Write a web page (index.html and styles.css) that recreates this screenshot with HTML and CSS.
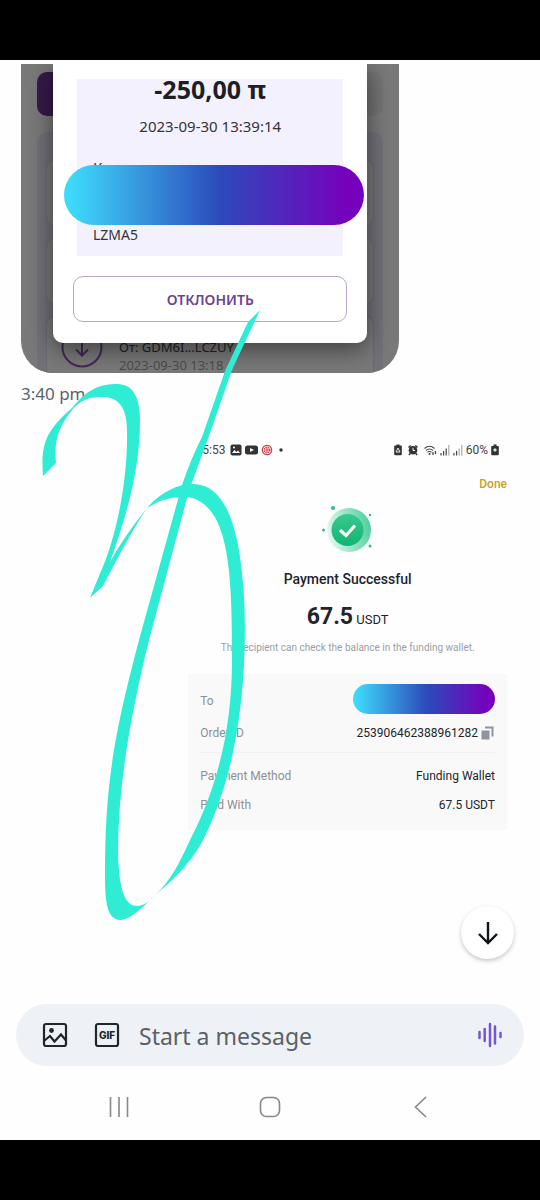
FILE: index.html
```html
<!DOCTYPE html>
<html lang="en">
  <head>
    <meta charset="UTF-8" />
    <meta name="viewport" content="width=device-width, initial-scale=1.0" />
    <title>Messages</title>
    <link rel="stylesheet" href="styles.css">
  </head>
  <body>
    <div class="letterbox"></div>
    <main class="chat">
      <div class="wallet">
        <div class="wallet-back">
          <div class="tabs">
            <div class="tab active"></div>
            <div class="tab"></div>
          </div>
          <div class="history">
            <div class="entry"></div>
            <div class="entry"></div>
            <div class="entry last">
              <svg class="entry-icon" viewBox="0 0 42 42">
                <circle cx="21" cy="21" r="19.5" />
                <path d="M21 12v17M15 23.500l6 6 6-6" />
              </svg>
              <div>
                <p class="from" lang="ru">От: GDM6I...LCZUY</p>
                <p class="date">2023-09-30 13:18</p>
              </div>
            </div>
          </div>
        </div>
        <div class="dialog">
          <div class="details">
            <h2>-250,00 π</h2>
            <p class="when">2023-09-30 13:39:14</p>
            <p class="address-label" lang="ru">К</p>
            <div class="cover"></div>
            <p class="address">LZMA5</p>
          </div>
          <button class="decline" lang="ru">ОТКЛОНИТЬ</button>
        </div>
      </div>
      <p class="time">3:40 pm</p>

      <section class="receipt">
        <div class="status">
          <span class="clock">5:53</span>
          <svg width="12" height="12" viewBox="0 0 12 12">
            <rect x="0.500" y="0.500" width="11" height="11" rx="2" fill="#333" />
            <path d="M2 9l2.500-3 2 2 1.500-1.500L10 9z" fill="#fff" />
            <circle cx="4" cy="3.500" r="1" fill="#fff" />
          </svg>
          <svg width="13" height="12" viewBox="0 0 13 12">
            <rect y="1.500" width="13" height="9" rx="2.500" fill="#333" />
            <path d="M5 4l4 2-4 2z" fill="#fff" />
          </svg>
          <svg width="12" height="12" viewBox="0 0 12 12">
            <circle cx="6" cy="6" r="4.700" fill="none" stroke="#cf3f4c" stroke-width="1.200" />
            <circle cx="6" cy="6" r="2.500" fill="none" stroke="#cf3f4c" stroke-width="2" stroke-dasharray="1.300 0.700" />
            <circle cx="6" cy="6" r="1" fill="#cf3f4c" />
          </svg>
          <svg class="more" width="4" height="12" viewBox="0 0 4 12">
            <circle cx="2" cy="6" r="1.700" fill="#333" />
          </svg>
          <svg class="right" width="8" height="12" viewBox="0 0 8 12">
            <path d="M2.500 0.500h3v1H7a.8.8 0 0 1 .8.8v8a1 1 0 0 1-1 1H1.200a1 1 0 0 1-1-1v-8A.8.8 0 0 1 1 1.500h1.500z" fill="#333" />
            <path d="M4 4L6 8H2z" fill="none" stroke="#fff" stroke-width="0.900" />
          </svg>
          <svg class="alarm" width="10" height="12" viewBox="0 0 10 12">
            <circle cx="5" cy="6.200" r="4.300" fill="#333" />
            <path d="M0.500 3.500l2.200-2M9.500 3.500l-2.200-2M2 9.500l-1 1.500M8 9.500l1 1.500" stroke="#333" stroke-width="1.500" />
            <path d="M5 3.800v2.700h2" fill="none" stroke="#fff" />
          </svg>
          <svg class="wifi" width="13" height="12" viewBox="0 0 13 12">
            <path d="M0.500 4.500Q5.500 0 10.500 4.500M2 6.500q3.500-3 7 0M3.500 8.300q2-1.600 4 0" fill="none" stroke="#444" stroke-width="1.100" />
            <circle cx="5.500" cy="10" r="1" fill="#444" />
            <path d="M9 8v3M11.500 7v3" stroke="#444" stroke-width="1.300" />
          </svg>
          <svg width="10" height="12" viewBox="0 0 10 12">
            <path d="M1 9v2.500M3.600 7v4.500M6.200 4.500v7" stroke="#444" stroke-width="1.200" />
            <path d="M8.800 1v10.500" stroke="#aaa" stroke-width="1.200" />
          </svg>
          <svg class="signal" width="10" height="12" viewBox="0 0 10 12">
            <path d="M1 9v2.500M3.600 7v4.500" stroke="#444" stroke-width="1.200" />
            <path d="M6.200 4.500v7M8.800 1v10.500" stroke="#aaa" stroke-width="1.200" />
          </svg>
          <span class="percent">60%</span>
          <svg width="8" height="12" viewBox="0 0 8 12">
            <path d="M2.500 0.500h3v1.500H7a.8.8 0 0 1 .8.8v7.500a1 1 0 0 1-1 1H1.200a1 1 0 0 1-1-1V2.800A.8.8 0 0 1 1 2h1.500z" fill="#333" />
            <path d="M4 4L6 6 4 8 2 6z" fill="#ddd" />
          </svg>
        </div>
        <a class="done" href="#">Done</a>
        <svg class="success" width="52" height="50" viewBox="0 0 52 50">
          <defs>
            <linearGradient id="ring" x1="0" x2="1" y1="0.600" y2="0.400">
              <stop offset="0" stop-color="#e4f9f0" />
              <stop offset="1" stop-color="#4fcf9c" />
            </linearGradient>
            <linearGradient id="disc" x1="0" x2="0" y1="0" y2="1">
              <stop offset="0" stop-color="#38c98e" />
              <stop offset="1" stop-color="#12b573" />
            </linearGradient>
          </defs>
          <circle cx="27" cy="25" r="22" fill="url(#ring)" />
          <circle cx="25.500" cy="25" r="16" fill="url(#disc)" />
          <path d="M18 25l6 5.500 9-10" fill="none" stroke="#fff" stroke-width="3.200" />
          <g fill="#35b98a">
            <circle cx="11" cy="3" r="2" />
            <circle cx="48" cy="10" r="1.200" />
            <circle cx="1.500" cy="25" r="1.500" />
            <circle cx="48" cy="41" r="1.500" />
          </g>
        </svg>
        <h3>Payment Successful</h3>
        <p class="amount"><strong>67.5</strong> USDT</p>
        <p class="note">The recipient can check the balance in the funding wallet.</p>
        <dl class="summary">
          <div class="row to">
            <dt>To</dt>
            <dd class="cover small"></dd>
          </div>
          <div class="row">
            <dt>Order ID</dt>
            <dd class="order">
              253906462388961282
              <svg width="14" height="14" viewBox="0 0 14 14">
                <path d="M0.500 4.500h8v9h-8z" fill="#8e94a0" />
                <path d="M4 1.500h7.500v9" fill="none" stroke="#8e94a0" stroke-width="2" />
              </svg>
            </dd>
          </div>
          <div class="row method">
            <dt>Payment Method</dt>
            <dd>Funding Wallet</dd>
          </div>
          <div class="row">
            <dt>Paid With</dt>
            <dd>67.5 USDT</dd>
          </div>
        </dl>
      </section>

      <!-- brush stroke over both messages -->
      <svg class="scribble" viewBox="40 308 224 614">
        <path d="M43 476C41 446 44 432 72 408C88 388 102 384 117 384C134 384 140 399 140 420C140 470 127 514 110 562Q125 535 147 508C162 491 178 484 194 484C219 485 232 511 239 550C245 587 246 625 244 665C240 738 226 795 202 842C189 865 173 880 155 895C145 905 131 920 120 920C107 919 105 903 105 874C105 785 114 735 139 640L182 485Q192 456 202 437L225 371L248 322L260 310L232 370L210 433L191 485L187 498L149 640C131 713 118 785 118 853C119 890 125 907 138 906Q147 905 155 895C170 882 180 862 190 840C217 788 232 730 232 660C232 600 231 550 217 521C208 503 195 497 185 497Q165 496 147 508C133 529 116 561 103 586L90 598L106 559C117 529 128 480 127 430C127 406 117 397 103 397Q83 396 72 410C57 429 54 443 56 463Z" />
      </svg>

      <button class="scroll-down" aria-label="Scroll down">
        <svg width="22" height="26" viewBox="0 0 22 26">
          <path d="M11 2v21M2 14l9 9 9-9" fill="none" stroke="#0f1419" stroke-width="2.400" />
        </svg>
      </button>
    </main>

    <form class="composer">
      <button type="button" aria-label="Photo">
        <svg width="26" height="26" viewBox="0 0 26 26">
          <rect x="2" y="2" width="22" height="22" rx="2" fill="none" stroke="#20262b" stroke-width="2.200" />
          <circle cx="9.500" cy="8.500" r="2.400" fill="#20262b" />
          <path d="M2.500 18.500L8 14l4.500 5.500 6.500-7 5 6" fill="none" stroke="#20262b" stroke-width="2.200" />
        </svg>
      </button>
      <button type="button" aria-label="GIF">
        <svg width="26" height="26" viewBox="0 0 26 26">
          <rect x="2" y="2" width="22" height="22" rx="2" fill="none" stroke="#20262b" stroke-width="2.200" />
          <text x="13" y="17" text-anchor="middle">GIF</text>
        </svg>
      </button>
      <input type="text" placeholder="Start a message" aria-label="Start a message" />
      <button type="button" class="voice" aria-label="Voice message">
        <svg width="26" height="26" viewBox="0 0 26 26">
          <path d="M2.500 10v6M7.700 7v12M13 2v22M18 4.500v17M23.500 11v4" stroke="#7457d0" stroke-width="2.500" stroke-linecap="round" />
        </svg>
      </button>
    </form>

    <nav class="system-nav">
      <button aria-label="Recent apps">
        <svg width="22" height="22" viewBox="0 0 22 22"><path d="M2.500 1v20M11 1v20M19.500 1v20" /></svg>
      </button>
      <button aria-label="Home">
        <svg width="22" height="22" viewBox="0 0 22 22"><rect x="1.500" y="1.500" width="19" height="19" rx="6" /></svg>
      </button>
      <button aria-label="Back">
        <svg width="22" height="22" viewBox="0 0 22 22"><path d="M16 1L5.500 11 16 21" /></svg>
      </button>
    </nav>
    <div class="letterbox"></div>
  </body>
</html>
```

FILE: styles.css
```css
* {
  box-sizing: border-box;
}
body {
  margin: 0;
  min-height: 100vh;
  display: flex;
  flex-direction: column;
  background-color: #fefefe;
  font-family: "Noto Sans", sans-serif;
}
p,
h2,
h3,
dl,
dd {
  margin: 0;
}
svg {
  display: block;
  flex-shrink: 0;
}
button {
  padding: 0;
  border: none;
  background: none;
}
.letterbox {
  height: 60px;
  background-color: #000;
}
.chat {
  position: relative;
  flex: 1;
  padding: 4px 21px 0;
}

/* wallet message */
.wallet {
  display: grid;
  width: 76%;
  background-color: #797979;
  border-radius: 0 0 32px 32px;
  overflow: hidden;
}
.wallet-back,
.dialog {
  grid-area: 1 / 1;
}
.wallet-back {
  display: flex;
  flex-direction: column;
  padding: 8px 16px 0;
}
.tabs {
  display: flex;
  height: 44px;
}
.tab {
  flex: 1;
  border-radius: 10px;
  background-color: #747474;
}
.tab.active {
  background-color: #351a49;
}
.history {
  display: flex;
  flex-direction: column;
  gap: 10px;
  flex: 1;
  margin-top: 16px;
  padding: 27px 9px 0;
  border-radius: 10px 10px 0 0;
  background-color: #737178;
}
.entry {
  height: 68px;
  border: 1px solid #6d6b72;
  border-radius: 10px;
  background-color: #797979;
}
.entry.last {
  display: flex;
  gap: 16px;
  height: 58px;
  padding: 10px 14px 0;
  border-bottom: none;
  border-radius: 10px 10px 0 0;
}
.entry-icon {
  width: 42px;
  height: 42px;
  fill: none;
  stroke: #44285a;
  stroke-width: 2;
}
.from,
.date {
  font-size: 13px;
  line-height: 18px;
}
.from {
  padding-top: 12px;
  color: #222;
}
.date {
  color: #4c4c4c;
}
.dialog {
  margin: 0 32px 30px;
  padding: 15px 20px 20px;
  border-radius: 0 0 10px 10px;
  background-color: #fff;
  box-shadow: 0 6px 24px rgba(0, 0, 0, 0.5);
}
.details {
  margin: 0 4px;
  padding: 0 16px 11px;
  background-color: #f3f1fe;
  color: #33333b;
  font-size: 15px;
  line-height: 20px;
}
.details h2 {
  color: #1e1e24;
  font-size: 25px;
  line-height: 20px;
  text-align: center;
}
.when {
  margin-top: 17px;
  text-align: center;
}
.address-label {
  height: 6px;
  margin-top: 23px;
  line-height: 16px;
}
.address {
  font-size: 14px;
}
.cover {
  position: relative;
  height: 60px;
  margin: 0 -37px 0 -29px;
  border-radius: 30px;
  background-image: linear-gradient(to right, #3edafb 2%, #2c4abb 52%, #7601bc 94%);
}
.decline {
  display: block;
  width: 100%;
  height: 46px;
  margin-top: 20px;
  border: 1px solid #b9a6c8;
  border-radius: 10px;
  color: #6d4290;
  font-family: "Noto Sans", sans-serif;
  font-size: 14px;
  font-weight: 600;
}
.time {
  margin-top: 9px;
  color: #59636b;
  font-size: 17px;
  line-height: 24px;
}

/* payment receipt */
.receipt {
  display: flex;
  flex-direction: column;
  width: 64%;
  margin: 34px 12px 0 auto;
  color: #20252d;
  font-family: Roboto, sans-serif;
}
.status {
  display: flex;
  align-items: center;
  gap: 3px;
  height: 20px;
  padding: 0 8px 0 14px;
  color: #444;
  font-size: 12px;
}
.status .clock {
  margin-right: 2px;
}
.status .more {
  margin-left: 3px;
}
.status .right {
  margin-left: auto;
}
.status .alarm {
  margin: 0 3px;
}
.done {
  align-self: flex-end;
  margin-top: 15px;
  color: #c7a21c;
  font-size: 12px;
  font-weight: 500;
  line-height: 18px;
  text-decoration: none;
}
.success {
  align-self: center;
  margin: 12px 0 14px;
}
.receipt h3 {
  font-size: 14px;
  font-weight: 500;
  line-height: 20px;
  text-align: center;
}
.amount {
  margin-top: 14px;
  font-size: 13px;
  line-height: 28px;
  text-align: center;
}
.amount strong {
  font-size: 23px;
}
.note {
  margin-top: 6px;
  color: #999fa6;
  font-size: 10px;
  line-height: 16px;
  text-align: center;
}
.summary {
  display: flex;
  flex-direction: column;
  margin-top: 18px;
  padding: 10px 12px;
  background-color: #f9f9f9;
  font-size: 12px;
}
.row {
  display: flex;
  justify-content: space-between;
  align-items: center;
  height: 30px;
}
.row dt {
  color: #8b9098;
}
.row.to {
  height: 34px;
}
.cover.small {
  align-self: flex-start;
  width: 142px;
  height: 30px;
  margin: 0;
}
.order {
  display: flex;
  align-items: center;
  gap: 3px;
}
.row.method {
  height: 38px;
  margin-top: 4px;
  padding-top: 8px;
  border-top: 1px solid #f1f1f1;
}

.scribble {
  position: absolute;
  top: 248px;
  left: 40px;
  width: 224px;
  height: 614px;
  fill: #2fedd5;
  pointer-events: none;
}
.scroll-down {
  position: absolute;
  right: 26px;
  bottom: 45px;
  display: grid;
  place-items: center;
  width: 53px;
  height: 53px;
  border-radius: 50%;
  background-color: #fff;
  box-shadow: 0 2px 4px rgba(0, 0, 0, 0.22);
}

.composer {
  display: flex;
  align-items: center;
  gap: 26px;
  height: 62px;
  margin: 0 16px;
  padding: 0 21px 0 26px;
  border-radius: 31px;
  background-color: #eef2f6;
}
.composer text {
  fill: #20262b;
  font-family: Inter, sans-serif;
  font-size: 10px;
  font-weight: 800;
}
.composer input {
  flex: 1;
  min-width: 0;
  margin-left: -7px;
  padding: 2px 0 0;
  border: none;
  outline: none;
  background: none;
  font-family: "Noto Sans", sans-serif;
  font-size: 23px;
}
.composer input::placeholder {
  color: #5b6166;
}
.system-nav {
  display: flex;
  justify-content: space-between;
  align-items: center;
  height: 74px;
  padding: 8px 20% 0;
}
.system-nav svg {
  fill: none;
  stroke: #888;
  stroke-width: 1.600;
}
```
